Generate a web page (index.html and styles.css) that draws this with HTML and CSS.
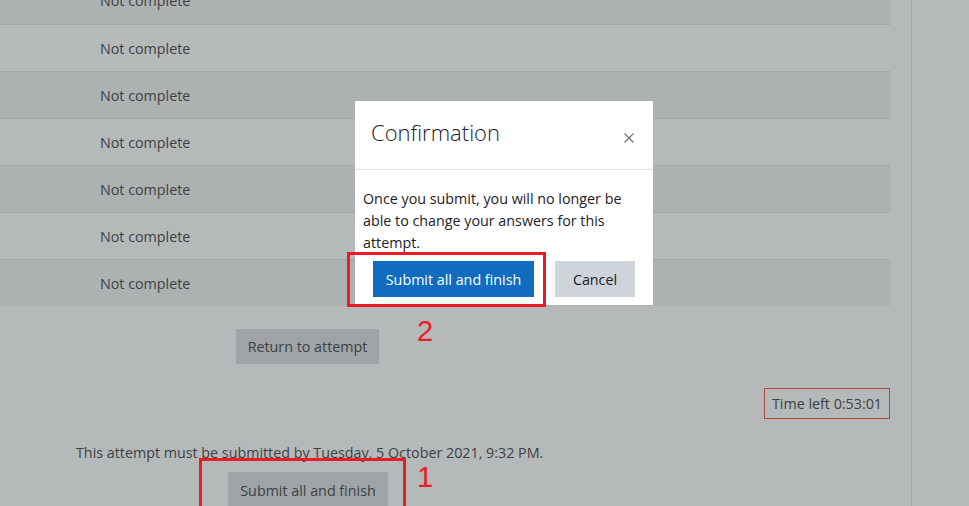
FILE: index.html
```html
<!DOCTYPE html>
<html>
<head>
<meta charset="utf-8">
<link rel="stylesheet" href="styles.css">
</head>
<body>
<div class="page">
  <main class="main">
    <div class="summary">
      <div class="row dark"><span class="status">Not complete</span></div>
      <div class="row"><span class="status">Not complete</span></div>
      <div class="row dark"><span class="status">Not complete</span></div>
      <div class="row"><span class="status">Not complete</span></div>
      <div class="row dark"><span class="status">Not complete</span></div>
      <div class="row"><span class="status">Not complete</span></div>
      <div class="row dark"><span class="status">Not complete</span></div>
    </div>
    <div class="return-wrap">
      <button class="btn btn-grey">Return to attempt</button>
    </div>
    <div class="timer-wrap">
      <div class="timer">Time left 0:53:01</div>
    </div>
    <p class="deadline">This attempt must be submitted by Tuesday, 5 October 2021, 9:32 PM.</p>
    <div class="submit-wrap">
      <button class="btn btn-grey">Submit all and finish</button>
    </div>
  </main>
  <aside class="side"></aside>
</div>

<div class="modal">
  <div class="modal-header">
    <h5 class="modal-title">Confirmation</h5>
    <svg class="close" width="10" height="10" viewBox="0 0 10 10"><path d="M0.5 0.5 L9.5 9.5 M9.5 0.5 L0.5 9.5" stroke="#707579" stroke-width="1.2" fill="none"/></svg>
  </div>
  <div class="modal-body">Once you submit, you will no longer be able to change your answers for this attempt.</div>
  <div class="modal-footer">
    <button class="btn btn-primary">Submit all and finish</button>
    <button class="btn btn-cancel">Cancel</button>
  </div>
</div>

<div class="mark mark-2"></div>
<div class="num num-2">2</div>
<div class="mark mark-1"></div>
<div class="num num-1">1</div>
</body>
</html>
```
FILE: styles.css
```css
html, body {
  margin: 0;
  padding: 0;
}
body {
  background: #b6b9ba;
  font-family: "Open Sans", "Noto Sans", sans-serif;
  font-size: 14.3px;
  color: #3d4145;
  width: 969px;
  height: 506px;
  overflow: hidden;
  position: relative;
}
.page {
  display: flex;
  height: 506px;
}
.main {
  width: 911px;
  border-right: 1px solid #a2a5a6;
  flex: none;
}
.side {
  flex: 1;
}
.summary {
  margin-top: -23px;
  width: 890px;
}
.row {
  height: 46px;
  border-top: 1px solid #a5a8a9;
  display: flex;
  align-items: center;
  padding-left: 100px;
}
.row:first-child {
  border-top: none;
  height: 47px;
}
.row.dark {
  background: #aeb1b2;
}
.btn {
  font-family: inherit;
  font-size: 14.3px;
  border: none;
  padding: 0;
  display: flex;
  align-items: center;
  justify-content: center;
}
.btn-grey {
  background: #a0a4a6;
  color: #3d4145;
}
.return-wrap {
  padding: 23px 0 0 236px;
}
.return-wrap .btn {
  width: 143px;
  height: 35px;
}
.timer-wrap {
  display: flex;
  justify-content: flex-end;
  width: 890px;
  margin-top: 24px;
}
.timer {
  border: 1px solid #ad4a3c;
  width: 124px;
  height: 29px;
  display: flex;
  align-items: center;
  justify-content: center;
}
.deadline {
  margin: 24px 0 0 76px;
  line-height: 20px;
}
.submit-wrap {
  padding: 9px 0 0 228px;
}
.submit-wrap .btn {
  width: 160px;
  height: 36px;
}
.modal {
  position: absolute;
  left: 355px;
  top: 101px;
  width: 298px;
  height: 204px;
  background: #fff;
  color: #1d2125;
  box-sizing: border-box;
}
.modal-header {
  height: 69px;
  border-bottom: 1px solid #dee2e6;
  display: flex;
  align-items: center;
  justify-content: space-between;
  padding: 0 19px 0 16px;
  box-sizing: border-box;
}
.modal-title {
  margin: 0 0 6px 0;
  font-size: 22px;
  font-weight: 300;
  color: #1d2125;
}
.close {
  margin-top: 6px;
}
.modal-body {
  padding: 18px 8px 0 8px;
  line-height: 22px;
}
.modal-footer {
  display: flex;
  gap: 21px;
  padding: 7px 0 0 18px;
}
.btn-primary {
  background: #0f6cbf;
  color: #fff;
  width: 161px;
  height: 36px;
}
.btn-cancel {
  background: #ced4da;
  color: #1d2125;
  width: 80px;
  height: 36px;
}
.mark {
  position: absolute;
  border: 3px solid #ed1c24;
  box-sizing: border-box;
}
.mark-2 {
  left: 347px;
  top: 252px;
  width: 199px;
  height: 55px;
}
.mark-1 {
  left: 199px;
  top: 458px;
  width: 207px;
  height: 60px;
}
.num {
  position: absolute;
  color: #ed1c24;
  font-family: "Liberation Sans", sans-serif;
  font-size: 29px;
  line-height: 1;
}
.num-2 {
  left: 417px;
  top: 317px;
}
.num-1 {
  left: 417px;
  top: 463px;
}
```
